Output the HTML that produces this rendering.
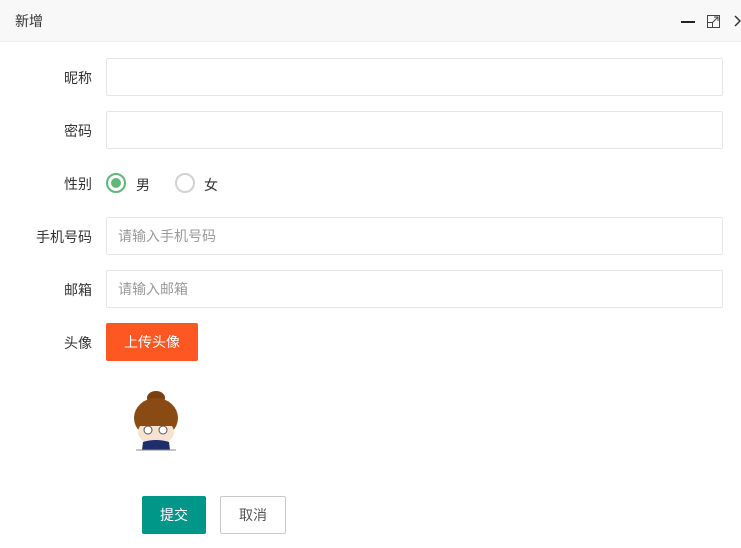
<!DOCTYPE html>
<html><head><meta charset="utf-8"><style>
*{margin:0;padding:0;box-sizing:border-box}
body{width:741px;height:548px;overflow:hidden;background:#fff;font-family:"Liberation Sans","Noto Sans CJK SC",sans-serif;font-size:14px;color:#333;position:relative}
.hd{position:absolute;left:0;top:0;width:741px;height:42px;background:#f8f8f8;border-bottom:1px solid #eee}
.hd .t{position:absolute;left:15px;top:11px;font-size:14px;color:#333}
.lab{position:absolute;width:92px;text-align:right;font-size:14px;color:#333}
.inp{position:absolute;left:106px;width:617px;height:38px;border:1px solid #e6e6e6;border-radius:2px;padding-left:11px;line-height:36px;color:#999;font-size:14px}
.btn{position:absolute;height:38px;line-height:38px;text-align:center;color:#fff;border-radius:2px;font-size:14px}
.rad{position:absolute;top:173px;width:20px;height:20px;border-radius:50%;border:2px solid #d2d2d2}
</style></head><body>
<div class="hd"><span class="t">新增</span>
<svg style="position:absolute;left:680px;top:12px" width="61" height="18" viewBox="0 0 61 18">
<line x1="1" y1="10" x2="15" y2="10" stroke="#222" stroke-width="2"/>
<rect x="27.5" y="3.5" width="12" height="12" fill="none" stroke="#444" stroke-width="1"/>
<rect x="27.5" y="10.5" width="5" height="5" fill="none" stroke="#444"/>
<path d="M32 11 L38 5 M34 5 L38 5 L38 9" fill="none" stroke="#444"/>
<path d="M55 4 L60 9 L55 14" fill="none" stroke="#333" stroke-width="1.5"/>
</svg></div>
<div class="lab" style="top:68px">昵称</div><div class="inp" style="top:58px"></div>
<div class="lab" style="top:121px">密码</div><div class="inp" style="top:111px"></div>
<div class="lab" style="top:174px">性别</div>
<div class="rad" style="left:106px;border-color:#5FB878"><div style="width:10px;height:10px;border-radius:50%;background:#5FB878;margin:3px"></div></div>
<span style="position:absolute;left:136px;top:175px">男</span>
<div class="rad" style="left:175px"></div>
<span style="position:absolute;left:204px;top:175px">女</span>
<div class="lab" style="top:227px">手机号码</div><div class="inp" style="top:217px">请输入手机号码</div>
<div class="lab" style="top:280px">邮箱</div><div class="inp" style="top:270px">请输入邮箱</div>
<div class="lab" style="top:333px">头像</div>
<div class="btn" style="left:106px;top:323px;width:92px;background:#FF5722">上传头像</div>
<svg style="position:absolute;left:130px;top:388px" width="52" height="66" viewBox="0 0 52 66">
<ellipse cx="26" cy="10" rx="9" ry="7" fill="#7a4010"/>
<ellipse cx="26" cy="30" rx="22" ry="20" fill="#8a4a14"/>
<ellipse cx="26" cy="44" rx="18" ry="13" fill="#f5e2d0"/>
<rect x="6" y="30" width="40" height="8" fill="#8a4a14"/>
<circle cx="18" cy="42" r="4" fill="#fff" stroke="#555"/><circle cx="33" cy="42" r="4" fill="#fff" stroke="#555"/>
<path d="M13 54 Q26 50 39 54 L40 62 L12 62Z" fill="#1f2d6b"/>
<line x1="6" y1="62" x2="46" y2="62" stroke="#888"/>
</svg>
<div class="btn" style="left:142px;top:496px;width:64px;background:#009688">提交</div>
<div class="btn" style="left:220px;top:496px;width:66px;background:#fff;border:1px solid #c9c9c9;color:#555;line-height:36px">取消</div>
</body></html>
